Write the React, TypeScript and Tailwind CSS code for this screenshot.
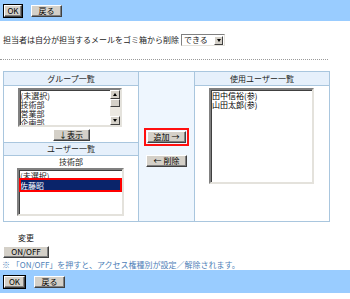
import React from "react";

const font = { fontFamily: '"Noto Sans CJK JP", "Noto Sans", sans-serif' };

function Btn({ children, w, def = false, cls = "" }: { children: React.ReactNode; w: string; def?: boolean; cls?: string }) {
  return (
    <div className={`${def ? "border border-black" : ""} ${cls}`}>
      <div
        className={`${w} h-[12px] bg-[#d4d0c8] border border-t-white border-l-white border-r-[#404040] border-b-[#404040] shadow-[inset_-1px_-1px_0_#808080] flex items-center justify-center text-[8px] leading-none text-black`}
      >
        {children}
      </div>
    </div>
  );
}

function ListBox({ cls, children }: { cls: string; children?: React.ReactNode }) {
  return (
    <div className={`${cls} bg-white border-2 border-t-[#808080] border-l-[#808080] border-b-[#e4e2dc] border-r-[#e4e2dc] shadow-[inset_1px_1px_0_#404040] relative overflow-hidden`}>
      {children}
    </div>
  );
}

export default function App() {
  return (
    <div className="w-[350px] h-[299px] bg-white overflow-hidden text-[#222] text-[8px] leading-none" style={font}>
      {/* top bar */}
      <div className="h-[21px] bg-[#99ccff] flex items-center pl-[3px] gap-[8px]">
        <Btn w="w-[18px]" def>OK</Btn>
        <Btn w="w-[31px]">戻る</Btn>
      </div>

      {/* option row */}
      <div className="mt-[13px] h-[12px] flex items-center pl-[3px]">
        <span>担当者は自分が担当するメールをゴミ箱から削除</span>
        <div className="ml-[2px] w-[44px] h-[12px] bg-white border border-t-[#808080] border-l-[#808080] border-b-[#e4e2dc] border-r-[#e4e2dc] flex items-center">
          <span className="pl-[2px] flex-1">できる</span>
          <div className="w-[9px] h-[9px] mr-[1px] bg-[#d4d0c8] border border-t-white border-l-white border-r-[#404040] border-b-[#404040] flex items-center justify-center">
            <div className="w-0 h-0 border-l-[2.5px] border-r-[2.5px] border-t-[3px] border-l-transparent border-r-transparent border-t-black" />
          </div>
        </div>
      </div>

      {/* dotted line */}
      <div className="mt-[13px] w-[328px] border-t border-dotted border-[#9a9a9a]" />

      {/* table */}
      <div className="mt-[11px] ml-[3px] w-[327px] h-[151px] border border-[#a9c6de] flex">
        {/* left col */}
        <div className="w-[135px] border-r border-[#a9c6de] flex flex-col">
          <div className="h-[14px] bg-[#e6f0fb] border-b border-[#a9c6de] flex items-center justify-center">グループ一覧</div>
          <div className="h-[57px] border-b border-[#a9c6de] flex flex-col items-center">
            <ListBox cls="mt-[2px] w-[104px] h-[39px] ml-[-3px]">
              <div className="pl-[1px] pt-[1px] leading-[9px]">
                <div>(未選択)</div>
                <div>技術部</div>
                <div>営業部</div>
                <div>企画部</div>
              </div>
              <div className="absolute right-0 top-0 bottom-0 w-[10px] bg-[#ece9e2] flex flex-col justify-between">
                <div>
                  <div className="w-[10px] h-[9px] bg-[#d4d0c8] border border-t-white border-l-white border-r-[#404040] border-b-[#404040] flex items-center justify-center">
                    <div className="w-0 h-0 border-l-[2.5px] border-r-[2.5px] border-b-[3px] border-l-transparent border-r-transparent border-b-black" />
                  </div>
                  <div className="w-[10px] h-[8px] bg-[#d4d0c8] border border-t-white border-l-white border-r-[#404040] border-b-[#404040]" />
                </div>
                <div className="w-[10px] h-[9px] bg-[#d4d0c8] border border-t-white border-l-white border-r-[#404040] border-b-[#404040] flex items-center justify-center">
                  <div className="w-0 h-0 border-l-[2.5px] border-r-[2.5px] border-t-[3px] border-l-transparent border-r-transparent border-t-black" />
                </div>
              </div>
            </ListBox>
            <Btn w="w-[37px]" cls="mt-[2px]">↓表示</Btn>
          </div>
          <div className="h-[13px] bg-[#e6f0fb] border-b border-[#a9c6de] flex items-center justify-center">ユーザー一覧</div>
          <div className="h-[12px] flex items-center justify-center">技術部</div>
          <ListBox cls="ml-[13px] w-[107px] h-[48px]">
            <div className="pt-[1px] leading-[9px]">
              <div className="pl-[1px]">(未選択)</div>
              <div className="relative h-[10px] bg-[#0a246a] text-white pl-[1px] flex items-center">
                佐藤昭
              </div>
            </div>
            <div className="absolute left-0 right-0 top-[8px] h-[14px] border-2 border-[#ff0000]" />
          </ListBox>
        </div>

        {/* center col */}
        <div className="w-[56px] bg-[#eef6fe] border-r border-[#a9c6de] flex flex-col items-center justify-center pt-[2px]">
          <div className="border-2 border-[#ff1010] p-px">
            <Btn w="w-[39px]">追加 →</Btn>
          </div>
          <Btn w="w-[41px]" cls="mt-[9px]">← 削除</Btn>
        </div>

        {/* right col */}
        <div className="flex-1 flex flex-col">
          <div className="h-[14px] bg-[#e6f0fb] border-b border-[#a9c6de] flex items-center justify-center">使用ユーザー一覧</div>
          <ListBox cls="mt-[2px] ml-[14px] w-[105px] h-[96px]">
            <div className="pl-[1px] pt-[1px] leading-[9px] text-black">
              <div>田中信裕(参)</div>
              <div>山田太郎(参)</div>
            </div>
          </ListBox>
        </div>
      </div>

      {/* 変更 */}
      <div className="mt-[11px] pl-[18px] h-[10px] flex items-center">変更</div>
      <div className="mt-[3px] pl-[3px]">
        <Btn w="w-[46px]" cls="inline-block">ON/OFF</Btn>
      </div>
      <div className="mt-[2px] pl-[2px] h-[9px] flex items-center text-[#4f7fb8]">※ 「ON/OFF」を押すと、アクセス権種別が設定／解除されます。</div>

      {/* bottom bar */}
      <div className="mt-[1px] h-[23px] bg-[#99ccff] flex items-center pl-[3px] gap-[8px]">
        <Btn w="w-[21px]" def>OK</Btn>
        <Btn w="w-[31px]">戻る</Btn>
      </div>
    </div>
  );
}
